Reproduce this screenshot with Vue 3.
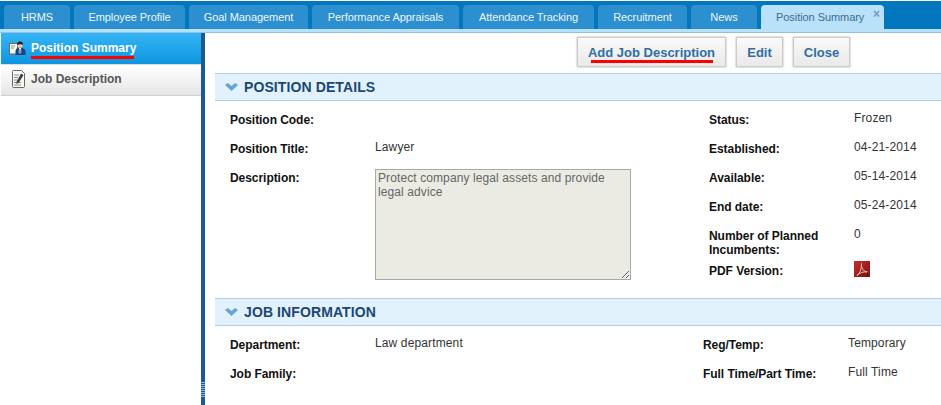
<script setup>
const tabs = [
  { label: 'HRMS', w: 66 },
  { label: 'Employee Profile', w: 111 },
  { label: 'Goal Management', w: 119 },
  { label: 'Performance Appraisals', w: 147 },
  { label: 'Attendance Tracking', w: 131 },
  { label: 'Recruitment', w: 89 },
  { label: 'News', w: 66 }
]
const detailLeft = [
  { label: 'Position Code:', value: '' },
  { label: 'Position Title:', value: 'Lawyer' }
]
const detailRight = [
  { label: 'Status:', value: 'Frozen' },
  { label: 'Established:', value: '04-21-2014' },
  { label: 'Available:', value: '05-14-2014' },
  { label: 'End date:', value: '05-24-2014' }
]
</script>

<template>
  <div class="page">
    <header class="tabbar">
      <div class="tabs">
        <div v-for="t in tabs" :key="t.label" class="tab" :style="{ width: t.w + 'px' }">{{ t.label }}</div>
        <div class="tab active">Position Summary<span class="x">×</span></div>
      </div>
    </header>
    <div class="main">
      <aside class="side">
        <div class="nav nav-on">
          <svg class="ico" width="17" height="14" viewBox="0 0 17 14">
            <rect x="0.5" y="2.500" width="8" height="10.500" fill="#f6f4e8" stroke="#6b6b5e" />
            <path d="M2 5h4M2 7h3" stroke="#999" />
            <path d="M6.500 14V10q0-2.500 2.500-3h4q3 .5 3.500 3v4z" fill="#1d3f7a" />
            <path d="M10 7h2l.3 4.500-1.300 1.500-1.300-1.500z" fill="#e6edf8" />
            <path d="M10.700 8h.6l.4 4-.7.8-.7-.8z" fill="#2a5db0" />
            <circle cx="11" cy="4" r="2.700" fill="#f0c79a" />
            <path d="M8 4Q8 .6 11 .6T14 4Q11.500 2.400 8 4z" fill="#222" />
          </svg>
          <span class="nav-text">Position Summary<i class="mark mark-nav"></i></span>
        </div>
        <div class="nav nav-off">
          <svg class="ico" width="14" height="18" viewBox="0 0 14 18">
            <path d="M2.500.5h8l3 3v13a1 1 0 0 1-1 1h-10a1 1 0 0 1-1-1v-15a1 1 0 0 1 1-1z" fill="#f8f8f4" stroke="#666" />
            <path d="M3 5h5M3 7.500h4M3 10h4M3 12.500h7M3 15h7" stroke="#888" />
            <path d="M5.500 12 10 3.500l2.500 1.500-4.500 7.500-2.500 1.500z" fill="#3f3f3f" />
          </svg>
          <span>Job Description</span>
        </div>
      </aside>
      <div class="splitter"><i class="grip"></i></div>
      <main class="content">
        <div class="actions">
          <button class="btn btn-add">Add Job Description<i class="mark mark-btn"></i></button>
          <button class="btn btn-edit">Edit</button>
          <button class="btn btn-close">Close</button>
        </div>

        <section class="bar">
          <svg width="13" height="8" viewBox="0 0 13 8"><path d="M0 2 2.800 0 6.500 3 10.200 0 13 2 6.500 8z" fill="#6aa5cf" /></svg>
          <h2>POSITION DETAILS</h2>
        </section>
        <div class="details">
          <div class="col-left">
            <div v-for="r in detailLeft" :key="r.label" class="row">
              <div class="lab">{{ r.label }}</div>
              <div class="val">{{ r.value }}</div>
            </div>
            <div class="row">
              <div class="lab">Description:</div>
              <textarea class="desc" readonly>Protect company legal assets and provide legal advice</textarea>
            </div>
          </div>
          <div class="col-right">
            <div v-for="r in detailRight" :key="r.label" class="row rrow">
              <div class="lab">{{ r.label }}</div>
              <div class="val">{{ r.value }}</div>
            </div>
            <div class="row rrow planned">
              <div class="lab">Number of Planned<br />Incumbents:</div>
              <div class="val">0</div>
            </div>
            <div class="row rrow pdf-row">
              <div class="lab">PDF Version:</div>
              <svg class="pdf" width="16" height="16" viewBox="0 0 16 16">
                <defs>
                  <linearGradient id="pg" x1="0" y1="0" x2="1" y2="1">
                    <stop offset="0" stop-color="#c9302c" />
                    <stop offset="1" stop-color="#7a0f0f" />
                  </linearGradient>
                </defs>
                <rect width="16" height="16" fill="url(#pg)" />
                <path d="M7.500 2.500q-.5 3 1 5.500t5 3q-3.500-.5-6 .5t-4.500 3q2.500-2 3.500-5t1-7z" fill="none" stroke="#e9b9b2" stroke-width="1" />
                <path d="M12 13h1v1h-1zM14 14h1v1h-1zM13 11.500h1v1h-1z" fill="#3a0606" />
              </svg>
            </div>
          </div>
        </div>

        <section class="bar bar-job">
          <svg width="13" height="8" viewBox="0 0 13 8"><path d="M0 2 2.800 0 6.500 3 10.200 0 13 2 6.500 8z" fill="#6aa5cf" /></svg>
          <h2>JOB INFORMATION</h2>
        </section>
        <div class="details job">
          <div class="col-left">
            <div class="row"><div class="lab">Department:</div><div class="val">Law department</div></div>
            <div class="row"><div class="lab">Job Family:</div><div class="val"></div></div>
          </div>
          <div class="col-right jobr">
            <div class="row rrow"><div class="lab">Reg/Temp:</div><div class="val">Temporary</div></div>
            <div class="row rrow"><div class="lab">Full Time/Part Time:</div><div class="val">Full Time</div></div>
          </div>
        </div>
      </main>
    </div>
  </div>
</template>

<style>
html, body { margin: 0; background: #fff; overflow: hidden; }
</style>

<style scoped>
.page {
  width: 941px;
  height: 405px;
  display: flex;
  flex-direction: column;
  overflow: hidden;
  font-family: "Liberation Sans", Arial, sans-serif;
  font-size: 12px;
  background: #fff;
}
.tabbar {
  margin-top: 1px;
  height: 28px;
  background: #0277bd;
  border-bottom: 3px solid #b9e1fa;
  box-shadow: 0 1px 0 #8fc0e8;
  flex: none;
}
.tabs { display: flex; gap: 4px; padding: 4px 0 0 4px; height: 24px; }
.tab {
  height: 24px;
  line-height: 25px;
  border-radius: 4px 4px 0 0;
  background: #2c8fcf;
  color: #eef6fc;
  font-size: 11px;
  letter-spacing: -0.06px;
  text-align: center;
  flex: none;
}
.tab.active {
  position: relative;
  width: 123px;
  background: #b9e1fa;
  color: #3c6c8f;
  text-align: left;
  padding-left: 15px;
  box-sizing: border-box;
}
.x {
  position: absolute;
  right: 4px;
  top: -3px;
  font-size: 12px;
  font-weight: bold;
  color: #6d9dc0;
}
.main { flex: 1; display: flex; min-height: 0; margin-top: 1px; }
.side { width: 200px; margin-left: 1px; flex: none; }
.nav {
  display: flex;
  align-items: center;
  font-weight: bold;
  box-sizing: border-box;
  padding-bottom: 2px;
}
.nav-on {
  height: 31px;
  background: linear-gradient(#35b5f5, #0d96e0);
  color: #fff;
  padding-left: 8px;
  gap: 5px;
}
.nav-off {
  height: 32px;
  background: linear-gradient(#fff, #e6e6e6);
  border-top: 1px solid #ddd;
  border-bottom: 1px solid #d0d0d0;
  color: #555;
  padding-left: 10px;
  gap: 6px;
}
.ico { flex: none; }
.nav-text { position: relative; }
.mark { position: absolute; background: #f00; display: block; height: 3px; }
.mark-nav { left: 0; top: 15px; width: 103px; }
.splitter { width: 4px; flex: none; background: #1f5a8f; position: relative; }
.grip {
  position: absolute;
  left: 0;
  right: 0;
  top: 348px;
  height: 16px;
  background: repeating-linear-gradient(#1f5a8f 0 1px, #8fb4d2 1px 2px);
}
.content { flex: 1; padding-left: 10px; min-width: 0; }
.actions {
  height: 40px;
  padding-top: 4px;
  padding-right: 91px;
  display: flex;
  justify-content: flex-end;
  gap: 10px;
  box-sizing: border-box;
}
.btn {
  height: 30px;
  box-sizing: border-box;
  border: 1px solid #ccc;
  box-shadow: 0 0 2px #aaa;
  background: linear-gradient(#fafafa, #e9e9e9);
  color: #2f6ea5;
  font: bold 13px "Liberation Sans", Arial, sans-serif;
  padding: 0;
  position: relative;
}
.btn-add { width: 149px; }
.btn-edit { width: 47px; }
.btn-close { width: 57px; }
.mark-btn { left: 13px; top: 22px; width: 122px; }
.bar {
  height: 28px;
  box-sizing: border-box;
  background: #e1f2fd;
  border-top: 1px solid #b3cfe2;
  border-bottom: 1px solid #b3cfe2;
  display: flex;
  align-items: center;
  padding-left: 10px;
  gap: 6px;
}
.bar h2 {
  margin: 0;
  font-size: 14px;
  font-weight: bold;
  letter-spacing: 0.1px;
  color: #1c4674;
}
.details { display: flex; height: 197px; box-sizing: border-box; padding: 11px 0 0 15px; }
.col-left { width: 479px; flex: none; }
.row { display: flex; align-items: flex-start; }
.col-left .row { height: 29px; }
.lab { width: 145px; flex: none; font-weight: bold; color: #111; padding-top: 1px; letter-spacing: -0.05px; }
.val { color: #333; position: relative; top: -1px; letter-spacing: 0.13px; }
.rrow { height: 29px; }
.desc {
  width: 256px;
  height: 111px;
  box-sizing: border-box;
  background: #ebebe4;
  border: 1px solid #a9a9a9;
  padding: 1px 2px 2px;
  margin: -1px 0 0;
  font: 12px "Liberation Sans", Arial, sans-serif;
  letter-spacing: 0.1px;
  color: #666;
  border-radius: 0;
  outline: none;
}
.planned { height: 35px; }
.pdf-row { height: 20px; }
.pdf { margin-top: -2px; }
.job { height: 80px; }
.jobr { margin-left: -6px; }
</style>
